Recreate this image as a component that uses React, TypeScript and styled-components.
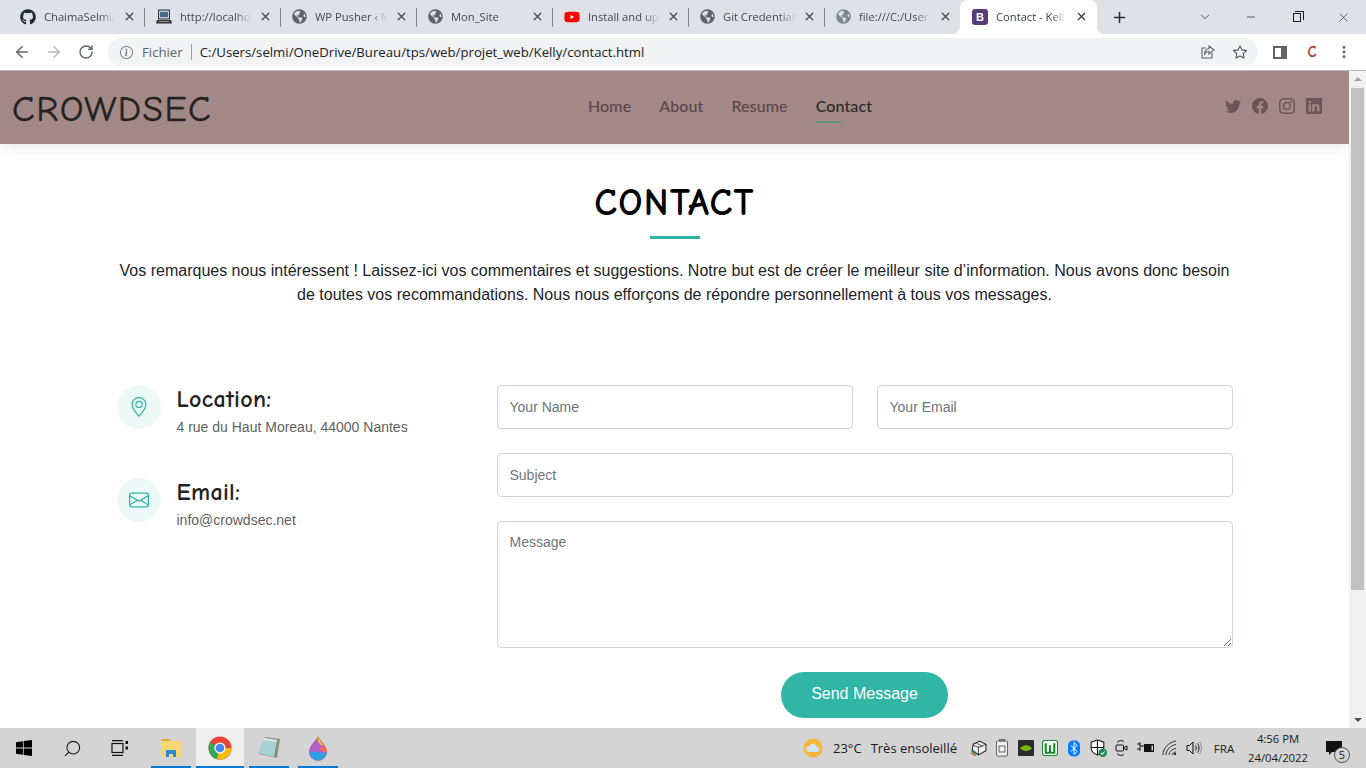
import React from 'react';
import styled, { createGlobalStyle, css } from 'styled-components';
import { BsTwitter, BsFacebook, BsInstagram, BsLinkedin, BsGeoAlt, BsEnvelope, BsInfoCircle, BsStar } from 'react-icons/bs';
import { FaGithub, FaGlobeAmericas, FaYoutube } from 'react-icons/fa';
import { ArrowLeft, ArrowRight, RotateCw, Plus, X, ChevronDown, Minus, Search, MoreVertical } from 'lucide-react';

const GlobalStyle = createGlobalStyle`
  html, body { margin: 0; padding: 0; overflow: hidden; background: #fff; }
  * { box-sizing: border-box; }
`;

const COMIC = `"Comic Sans MS", "Comic Neue", cursive, "Lato", sans-serif`;
const UI = `"Open Sans", "Noto Sans", sans-serif`;

// -------------
// Browser frame
// -------------

const Screen = styled.div`
  width: 1366px;
  height: 768px;
  display: flex;
  flex-direction: column;
  overflow: hidden;
  font-family: "Liberation Sans", Arial, sans-serif;
`;

const TabStrip = styled.div`
  height: 34px;
  background: #dee1e6;
  display: flex;
  align-items: flex-end;
  padding-left: 9px;
  flex-shrink: 0;
`;

const activeTab = css`
  width: 137px;
  margin-left: -1px;
  padding-left: 12px;
  background: #fff;
  color: #3c4043;
  border-radius: 8px 8px 0 0;
  &::before,
  &::after {
    content: '';
    position: absolute;
    bottom: 0;
    width: 8px;
    height: 8px;
  }
  &::before {
    left: -8px;
    background: radial-gradient(circle at 0 0, #dee1e6 8px, #fff 8.5px);
  }
  &::after {
    right: -8px;
    background: radial-gradient(circle at 100% 0, #dee1e6 8px, #fff 8.5px);
  }
`;

const separator = css`
  &::after {
    content: '';
    position: absolute;
    right: 0;
    top: 8px;
    width: 1px;
    height: 19px;
    background: #85888c;
  }
`;

const Tab = styled.div<{ $active?: boolean; $last?: boolean }>`
  position: relative;
  width: 136px;
  height: 34px;
  display: flex;
  align-items: center;
  padding: 0 9px 1px 11px;
  gap: 8px;
  font-family: ${UI};
  font-size: 11.2px;
  color: #45494e;
  svg { flex-shrink: 0; }
  ${p => (p.$active ? activeTab : p.$last ? '' : separator)}
`;

const TabTitle = styled.span`
  flex: 1;
  white-space: nowrap;
  overflow: hidden;
  -webkit-mask-image: linear-gradient(to right, #000 78%, transparent 100%);
  mask-image: linear-gradient(to right, #000 78%, transparent 100%);
`;

const BootstrapBadge = styled.span`
  width: 16px;
  height: 16px;
  border-radius: 3px;
  background: #563d7c;
  color: #fff;
  font-size: 11px;
  font-weight: 700;
  font-family: "Liberation Sans", sans-serif;
  display: flex;
  align-items: center;
  justify-content: center;
  flex-shrink: 0;
`;

const NewTab = styled.div`
  width: 44px;
  height: 34px;
  display: flex;
  align-items: center;
  justify-content: center;
  color: #2b2e31;
`;

const WindowControls = styled.div`
  margin-left: auto;
  display: flex;
  height: 34px;
  color: #202124;
`;

const WindowButton = styled.div`
  width: 46px;
  display: flex;
  align-items: center;
  justify-content: center;
`;

const RestoreIcon = styled.div`
  width: 8px;
  height: 9px;
  border: 1px solid #202124;
  position: relative;
  &::after {
    content: '';
    position: absolute;
    top: -3px;
    left: 1px;
    width: 8px;
    height: 8px;
    border-top: 1px solid #202124;
    border-right: 1px solid #202124;
  }
`;

const Toolbar = styled.div`
  height: 37px;
  background: #fff;
  display: flex;
  align-items: center;
  flex-shrink: 0;
  padding-left: 6px;
  border-bottom: 1px solid #b9b9b9;
`;

const NavIcon = styled.div<{ $muted?: boolean; $w?: number }>`
  width: ${p => p.$w || 32}px;
  height: 28px;
  display: flex;
  align-items: center;
  justify-content: center;
  color: ${p => (p.$muted ? '#b4b6b9' : '#5f6368')};
`;

const AddressBar = styled.div`
  width: 1150px;
  margin-left: 6px;
  height: 28px;
  border-radius: 14px;
  background: #f1f3f4;
  display: flex;
  align-items: center;
  padding-left: 12px;
  font-family: ${UI};
  font-size: 13.2px;
  color: #202124;
`;

const FileLabel = styled.span`
  color: #5f6368;
  margin-left: 9px;
  padding-right: 8px;
  border-right: 1px solid #9aa0a6;
  line-height: 16px;
`;

const Url = styled.span`
  margin-left: 8px;
`;

const AddressActions = styled.div`
  margin-left: auto;
  display: flex;
  align-items: center;
  padding-right: 2px;
`;

const ExtensionLetter = styled.span`
  font-family: ${COMIC};
  font-weight: 700;
  font-size: 15px;
  color: #a8392b;
`;

const SidePanelIcon = styled.div`
  width: 14px;
  height: 13px;
  border: 2px solid #5f6368;
  border-right-width: 6px;
`;

// --------
// Viewport
// --------

const Viewport = styled.div`
  flex: 1;
  display: flex;
  min-height: 0;
`;

const Page = styled.div`
  flex: 1;
  min-width: 0;
  overflow: hidden;
  background: #fff;
`;

const Scrollbar = styled.div`
  width: 17px;
  background: #f1f1f1;
  display: flex;
  flex-direction: column;
  align-items: center;
  justify-content: space-between;
`;

const ScrollArrow = styled.div<{ $down?: boolean }>`
  width: 0;
  height: 0;
  margin: 6px 0;
  border-left: 4px solid transparent;
  border-right: 4px solid transparent;
  border-${p => (p.$down ? 'top' : 'bottom')}: 4px solid ${p => (p.$down ? '#505050' : '#a3a3a3')};
`;

const ScrollThumb = styled.div`
  width: 13px;
  height: 502px;
  margin-top: 1px;
  background: #c1c1c1;
  margin-bottom: auto;
`;

const Header = styled.header`
  height: 73px;
  background: #a38888;
  display: flex;
  align-items: center;
  padding: 0 27px 3px 12px;
  position: relative;
  box-shadow: 0 2px 15px rgba(0, 0, 0, 0.1);
`;

const Logo = styled.div`
  width: 480px;
  font-family: ${COMIC};
  font-size: 37px;
  letter-spacing: 1.5px;
  color: #222;
  line-height: 1;
  -webkit-text-stroke: 0.4px #222;
  position: relative;
  top: 3px;
`;

const Nav = styled.nav`
  display: flex;
  gap: 28px;
  margin: 0 0 2px 96px;
`;

const NavLink = styled.a<{ $active?: boolean }>`
  font-family: "Lato", sans-serif;
  font-size: 16px;
  font-weight: 500;
  letter-spacing: 0.1px;
  color: ${p => (p.$active ? '#2b2b2b' : '#5e4548')};
  position: relative;
  &::after {
    content: '';
    display: ${p => (p.$active ? 'block' : 'none')};
    position: absolute;
    left: 0;
    bottom: -8px;
    width: 25px;
    height: 2px;
    background: #5f9180;
  }
`;

const Socials = styled.div`
  margin-left: auto;
  display: flex;
  gap: 11px;
  color: #6b5558;
  font-size: 16px;
  svg { display: block; }
`;

const Section = styled.section`
  width: 1140px;
  margin: 0 auto;
  padding: 40px 12px 0;
`;

const Title = styled.h2`
  margin: 0;
  text-align: center;
  font-family: ${COMIC};
  font-size: 38px;
  letter-spacing: 1.3px;
  font-weight: 700;
  line-height: 38px;
  color: #000;
  position: relative;
  padding-bottom: 17px;
  &::after {
    content: '';
    position: absolute;
    left: 50%;
    bottom: 0;
    width: 50px;
    height: 3px;
    margin-left: -25px;
    background: #2eb5a4;
  }
`;

const Lead = styled.p`
  margin: 20px 0 0;
  text-align: center;
  font-size: 16px;
  line-height: 24px;
  color: #212529;
`;

const Columns = styled.div`
  display: flex;
  margin-top: 78px;
`;

const InfoColumn = styled.div`
  width: 380px;
  flex-shrink: 0;
  display: flex;
  flex-direction: column;
  gap: 49px;
`;

const InfoItem = styled.div`
  display: flex;
  gap: 16px;
  height: 44px;
`;

const InfoIcon = styled.div`
  width: 44px;
  height: 44px;
  border-radius: 50%;
  background: #ecf9f7;
  color: #2eb5a4;
  font-size: 20px;
  display: flex;
  align-items: center;
  justify-content: center;
  flex-shrink: 0;
`;

const InfoHeading = styled.h4`
  margin: 0 0 6px;
  font-family: ${COMIC};
  font-size: 24px;
  letter-spacing: 0.3px;
  font-weight: 700;
  line-height: 28px;
  color: #222;
`;

const InfoText = styled.p`
  margin: 0;
  font-size: 14px;
  line-height: 16px;
  color: #5f5f5f;
`;

const ContactForm = styled.form`
  flex: 1;
  display: flex;
  flex-direction: column;
  gap: 24px;
`;

const FormRow = styled.div`
  display: flex;
  gap: 24px;
`;

const Input = styled.input`
  flex: 1;
  min-width: 0;
  height: 44px;
  padding: 0 12px;
  border: 1px solid #ced4da;
  border-radius: 4px;
  background: #fff;
  font-family: inherit;
  font-size: 14px;
  &::placeholder { color: #6c757d; opacity: 1; }
`;

const TextArea = styled.textarea`
  display: block;
  width: 100%;
  height: 127px;
  padding: 12px;
  border: 1px solid #ced4da;
  border-radius: 4px;
  background: #fff;
  font-family: inherit;
  font-size: 14px;
  line-height: 17px;
  &::placeholder { color: #6c757d; opacity: 1; }
`;

const SendButton = styled.button`
  align-self: center;
  width: 167px;
  height: 46px;
  padding: 0 0 2px;
  border: 0;
  border-radius: 23px;
  background: #31b5a5;
  color: #fff;
  font-family: inherit;
  font-size: 16px;
`;

// -------
// Taskbar
// -------

const Taskbar = styled.div`
  height: 40px;
  background: #d4d4d4;
  display: flex;
  align-items: stretch;
  flex-shrink: 0;
  color: #1a1a1a;
`;

const StartCell = styled.div`
  width: 48px;
  display: flex;
  align-items: center;
  justify-content: center;
`;

const AppCell = styled.div<{ $active?: boolean; $ml?: number }>`
  width: ${p => (p.$active ? 48 : 40)}px;
  margin-left: ${p => p.$ml || 0}px;
  display: flex;
  align-items: center;
  justify-content: center;
  background: ${p => (p.$active ? '#eeeeee' : 'transparent')};
  border-bottom: 2px solid #0078d4;
  padding-top: 2px;
`;

const Tray = styled.div`
  margin-left: auto;
  display: flex;
  align-items: center;
  padding-right: 14px;
  font-family: ${UI};
  font-size: 13px;
`;

const TrayIcon = styled.div<{ $ml?: number }>`
  width: 24px;
  height: 24px;
  margin-left: ${p => p.$ml || 0}px;
  display: flex;
  align-items: center;
  justify-content: center;
`;

const WeatherText = styled.span<{ $ml: number }>`
  margin-left: ${p => p.$ml}px;
  white-space: nowrap;
`;

const Lang = styled.span`
  width: 30px;
  text-align: center;
  margin: 0 1px 0 3px;
  font-size: 11.5px;
`;

const Clock = styled.div`
  width: 76px;
  text-align: center;
  font-size: 11.3px;
  line-height: 19px;
`;

const Notification = styled.div`
  width: 36px;
  position: relative;
  display: flex;
  align-items: center;
  justify-content: center;
`;

const NotificationCount = styled.span`
  position: absolute;
  right: 2px;
  bottom: -7px;
  width: 16px;
  height: 16px;
  border: 1px solid #555;
  border-radius: 50%;
  background: #d4d4d4;
  font-size: 11px;
  line-height: 14px;
  text-align: center;
`;

// -----
// Icons
// -----

const WindowsLogo = () => (
  <svg width="16" height="16" viewBox="0 0 16 16" fill="#000">
    <path d="M0 2.2 6.9 1.2V7.6H0zM7.7 1.1 16 0V7.6H7.7zM0 8.4H6.9V14.8L0 13.8zM7.7 8.4H16V16L7.7 14.9z" />
  </svg>
);

const TaskView = () => (
  <svg width="18" height="16" viewBox="0 0 18 16" fill="none" stroke="#111" strokeWidth="1.2">
    <path d="M1 .6H12M1 15.4H12" />
    <rect x="1" y="3.5" width="11" height="9" />
    <rect x="14.5" y="1" width="2.5" height="3" fill="#111" stroke="none" />
    <rect x="14.5" y="6.5" width="2.5" height="3" fill="#111" stroke="none" />
  </svg>
);

const FolderIcon = () => (
  <svg width="22" height="20" viewBox="0 0 22 20">
    <path d="M1 1h8l2 2h10v16H1z" fill="#f7d774" />
    <path d="M1 1h8l2 2H1z" fill="#e2a83a" />
    <path d="M6 12h10v7h-3v-3H9v3H6z" fill="#2b89d6" />
  </svg>
);

const ChromeIcon = () => (
  <svg width="24" height="24" viewBox="0 0 24 24">
    <circle cx="12" cy="12" r="11.5" fill="#ea4335" />
    <path d="M12 12 2 6.3A11.5 11.5 0 0 0 9 23.1z" fill="#34a853" />
    <path d="M12 12h11.2A11.5 11.5 0 0 1 9 23.1z" fill="#fbbc05" />
    <circle cx="12" cy="12" r="5.6" fill="#fff" />
    <circle cx="12" cy="12" r="4.3" fill="#4285f4" />
  </svg>
);

const NotepadIcon = () => (
  <svg width="24" height="24" viewBox="0 0 24 24">
    <path d="M8 1 23 3 20 22 2 18z" fill="#8a8f7a" />
    <path d="M7 2 20 4 17 21 1 17z" fill="#a7d3d8" />
    <path d="M7 2 20 4 19.6 6 6 4z" fill="#dfe7e6" />
  </svg>
);

const DropIcon = () => (
  <svg width="20" height="26" viewBox="0 0 20 26">
    <path d="M10 1C12 6 19 10 19 17a9 9 0 0 1-18 0C1 10 8 6 10 1z" fill="#b05ec9" />
    <path d="M1.2 18A9 9 0 0 0 19 17C14 20 6 14 1.2 18z" fill="#2f9fe0" />
    <path d="M10 1C11 5 14 8 16 11 12 10 9 8 10 1z" fill="#f6c21c" />
    <path d="M16 11c2 2 3 4 3 6-3 1-5-1-8-3 1-2 3-3 5-3z" fill="#ee6a5e" />
  </svg>
);

const LaptopTab = () => (
  <svg width="16" height="16" viewBox="0 0 16 16">
    <rect x="2.5" y="1" width="11" height="9" fill="#bcd" stroke="#333" />
    <rect x="4" y="3" width="8" height="5" fill="#4a6a8a" />
    <path d="M1 11h14l1 3.5H0z" fill="#333" />
    <path d="M3 12.5h10" stroke="#999" />
  </svg>
);

const ShareIcon = () => (
  <svg width="16" height="16" viewBox="0 0 16 16" fill="none" stroke="#5f6368" strokeWidth="1.1">
    <path d="M6 4H2v10h10V9" />
    <path d="M9 2l5 4-5 4V7.5C6.5 7.5 5 9 4.5 11 4.5 7 6.5 4.8 9 4.5z" />
  </svg>
);

const WeatherIcon = () => (
  <svg width="20" height="20" viewBox="0 0 20 20">
    <circle cx="10" cy="10" r="9.5" fill="#f6b73c" />
    <path d="M6 14a3 3 0 0 1 .5-6 4 4 0 0 1 7.5 1 2.5 2.5 0 0 1 0 5z" fill="#cfe3f2" />
  </svg>
);

const PrinterTray = () => (
  <svg width="17" height="17" viewBox="0 0 16 16">
    <path d="M3 4 9 1 15 4V10L8 14 2 10z" fill="#eee" stroke="#222" />
    <path d="M8 6V14M3 5l5 2 7-3M6 3l6 3" fill="none" stroke="#222" strokeWidth=".7" />
    <path d="M1 12l4 3" stroke="#d33" />
    <path d="M2 11l4 3" stroke="#2a2" />
    <path d="M3 10l4 3" stroke="#26a" />
  </svg>
);

const BatteryTray = () => (
  <svg width="12" height="18" viewBox="0 0 12 18" fill="none" stroke="#666">
    <rect x=".5" y="2" width="11" height="15" rx="1" fill="#eee" />
    <rect x="3.5" y=".5" width="5" height="1.5" />
    <rect x="3" y="7" width="6" height="6" />
  </svg>
);

const NvidiaTray = () => (
  <svg width="16" height="16" viewBox="0 0 15 15">
    <rect width="15" height="15" rx="1" fill="#2b2b2b" />
    <path d="M2 8c3-4 8-4 11 0-3 3-8 3-11 0z" fill="#76b900" />
  </svg>
);

const GreenTray = () => (
  <svg width="16" height="16" viewBox="0 0 15 15" fill="none">
    <rect x=".5" y=".5" width="14" height="14" rx="2" fill="#fff" stroke="#1a8a2e" />
    <path d="M3.5 3v9h8V3M7.5 5v7" stroke="#1a8a2e" strokeWidth="2" />
  </svg>
);

const BluetoothTray = () => (
  <svg width="12" height="17" viewBox="0 0 12 16">
    <rect width="12" height="16" rx="5" fill="#0a7cff" />
    <path d="M3 5l6 6-3 3V2l3 3-6 6" fill="none" stroke="#fff" />
  </svg>
);

const ShieldTray = () => (
  <svg width="17" height="18" viewBox="0 0 16 17">
    <path d="M7 1 13 3V8C13 12 10 14 7 15 4 14 1 12 1 8V3z" fill="#fff" stroke="#111" />
    <path d="M7 1V15M1 8H13" stroke="#111" />
    <circle cx="12" cy="13" r="4" fill="#1b8a4c" />
    <path d="M10.2 13l1.3 1.3 2.3-2.5" fill="none" stroke="#fff" />
  </svg>
);

const CameraTray = () => (
  <svg width="14" height="18" viewBox="0 0 14 18" fill="none" stroke="#111">
    <path d="M2 3.5C3 1.5 7 1 9 2.5M2 14.5C3 16.5 7 17 9 15.5" />
    <rect x="1" y="6" width="7.5" height="6" rx="1" />
    <path d="M9 8.5l3-1.5v4l-3-1.500" />
  </svg>
);

const PowerTray = () => (
  <svg width="18" height="14" viewBox="0 0 18 14">
    <path d="M0 3h3M0 8h3M3 1v9M3 5h4" stroke="#111" fill="none" />
    <rect x="7" y="3" width="10" height="8" fill="#111" />
    <rect x="14.5" y="4.5" width="1.5" height="5" fill="#d4d4d4" />
  </svg>
);

const WifiTray = () => (
  <svg width="16" height="16" viewBox="0 0 16 16" fill="none" stroke="#333" strokeWidth="1">
    <path d="M1 15C1 8 7 2 14 1M4 15C4 10 9 5 14 4.5M7 15C7 12 10 9 14 8.5M10 15c0-1.5 2-3 4-3" />
    <circle cx="13" cy="14" r="1.2" fill="#333" stroke="none" />
  </svg>
);

const VolumeTray = () => (
  <svg width="16" height="16" viewBox="0 0 16 16" fill="none" stroke="#111" strokeWidth="1">
    <path d="M1 5.5h2.5L7 2v12L3.5 10.5H1z" />
    <path d="M9.5 5.5c1 1.5 1 3.5 0 5M11.5 3.5c2 2.5 2 6.5 0 9" />
    <path d="M13.5 2c2.5 3.5 2.5 8.500 0 12" stroke="#888" />
  </svg>
);

const messages = 'Vos remarques nous intéressent ! Laissez-ici vos commentaires et suggestions. Notre but est de créer le meilleur site d’information. Nous avons donc besoin de toutes vos recommandations. Nous nous efforçons de répondre personnellement à tous vos messages.';

export default function App() {
  return (
    <Screen>
      <GlobalStyle />
      <TabStrip>
        <Tab><FaGithub size={16} color="#24292e" /><TabTitle>ChaimaSelmi/</TabTitle><X size={13} strokeWidth={2.4} /></Tab>
        <Tab><LaptopTab /><TabTitle>http://localho</TabTitle><X size={13} strokeWidth={2.4} /></Tab>
        <Tab><FaGlobeAmericas size={15} color="#5f6368" /><TabTitle>WP Pusher ‹ M</TabTitle><X size={13} strokeWidth={2.4} /></Tab>
        <Tab><FaGlobeAmericas size={15} color="#5f6368" /><TabTitle>Mon_Site</TabTitle><X size={13} strokeWidth={2.4} /></Tab>
        <Tab><FaYoutube size={16} color="#f00" /><TabTitle>Install and up</TabTitle><X size={13} strokeWidth={2.4} /></Tab>
        <Tab><FaGlobeAmericas size={15} color="#5f6368" /><TabTitle>Git Credential</TabTitle><X size={13} strokeWidth={2.4} /></Tab>
        <Tab $last><FaGlobeAmericas size={15} color="#80868b" /><TabTitle>file:///C:/User</TabTitle><X size={13} strokeWidth={2.4} /></Tab>
        <Tab $active><BootstrapBadge>B</BootstrapBadge><TabTitle>Contact - Kell</TabTitle><X size={13} strokeWidth={2.4} /></Tab>
        <NewTab><Plus size={17} strokeWidth={2.2} /></NewTab>
        <WindowControls>
          <WindowButton><ChevronDown size={14} strokeWidth={1.2} /></WindowButton>
          <WindowButton><Minus size={12} strokeWidth={1.4} /></WindowButton>
          <WindowButton><RestoreIcon /></WindowButton>
          <WindowButton><X size={15} strokeWidth={1} /></WindowButton>
        </WindowControls>
      </TabStrip>
      <Toolbar>
        <NavIcon><ArrowLeft size={18} strokeWidth={2} /></NavIcon>
        <NavIcon $muted><ArrowRight size={18} strokeWidth={2} /></NavIcon>
        <NavIcon><RotateCw size={16} strokeWidth={2.2} /></NavIcon>
        <AddressBar>
          <BsInfoCircle size={13} color="#5f6368" />
          <FileLabel>Fichier</FileLabel>
          <Url>C:/Users/selmi/OneDrive/Bureau/tps/web/projet_web/Kelly/contact.html</Url>
          <AddressActions>
            <NavIcon><ShareIcon /></NavIcon>
            <NavIcon><BsStar size={14} color="#3c4043" /></NavIcon>
          </AddressActions>
        </AddressBar>
        <NavIcon $w={44}><SidePanelIcon /></NavIcon>
        <NavIcon $w={20}><ExtensionLetter>C</ExtensionLetter></NavIcon>
        <NavIcon $w={44}><MoreVertical size={16} strokeWidth={2.4} /></NavIcon>
      </Toolbar>
      <Viewport>
        <Page>
          <Header>
            <Logo>CROWDSEC</Logo>
            <Nav>
              <NavLink>Home</NavLink>
              <NavLink>About</NavLink>
              <NavLink>Resume</NavLink>
              <NavLink $active>Contact</NavLink>
            </Nav>
            <Socials>
              <BsTwitter />
              <BsFacebook />
              <BsInstagram />
              <BsLinkedin />
            </Socials>
          </Header>
          <Section>
            <Title>CONTACT</Title>
            <Lead>{messages}</Lead>
            <Columns>
              <InfoColumn>
                <InfoItem>
                  <InfoIcon><BsGeoAlt /></InfoIcon>
                  <div>
                    <InfoHeading>Location:</InfoHeading>
                    <InfoText>4 rue du Haut Moreau, 44000 Nantes</InfoText>
                  </div>
                </InfoItem>
                <InfoItem>
                  <InfoIcon><BsEnvelope /></InfoIcon>
                  <div>
                    <InfoHeading>Email:</InfoHeading>
                    <InfoText>info@crowdsec.net</InfoText>
                  </div>
                </InfoItem>
              </InfoColumn>
              <ContactForm>
                <FormRow>
                  <Input placeholder="Your Name" />
                  <Input placeholder="Your Email" />
                </FormRow>
                <FormRow>
                  <Input placeholder="Subject" />
                </FormRow>
                <TextArea placeholder="Message" />
                <SendButton type="button">Send Message</SendButton>
              </ContactForm>
            </Columns>
          </Section>
        </Page>
        <Scrollbar>
          <ScrollArrow />
          <ScrollThumb />
          <ScrollArrow $down />
        </Scrollbar>
      </Viewport>
      <Taskbar>
        <StartCell><WindowsLogo /></StartCell>
        <StartCell><Search size={19} strokeWidth={1.4} style={{ transform: 'scaleX(-1)' }} /></StartCell>
        <StartCell><TaskView /></StartCell>
        <AppCell $ml={7}><FolderIcon /></AppCell>
        <AppCell $ml={5} $active><ChromeIcon /></AppCell>
        <AppCell $ml={5}><NotepadIcon /></AppCell>
        <AppCell $ml={9}><DropIcon /></AppCell>
        <Tray>
          <WeatherIcon />
          <WeatherText $ml={10}>23°C</WeatherText>
          <WeatherText $ml={9}>Très ensoleillé</WeatherText>
          <TrayIcon $ml={9}><PrinterTray /></TrayIcon>
          <TrayIcon><BatteryTray /></TrayIcon>
          <TrayIcon><NvidiaTray /></TrayIcon>
          <TrayIcon><GreenTray /></TrayIcon>
          <TrayIcon><BluetoothTray /></TrayIcon>
          <TrayIcon><ShieldTray /></TrayIcon>
          <TrayIcon><CameraTray /></TrayIcon>
          <TrayIcon><PowerTray /></TrayIcon>
          <TrayIcon><WifiTray /></TrayIcon>
          <TrayIcon><VolumeTray /></TrayIcon>
          <Lang>FRA</Lang>
          <Clock>4:56 PM<br />24/04/2022</Clock>
          <Notification>
            <svg width="16" height="15" viewBox="0 0 16 15"><path d="M0 0H16V11H6L3 14V11H0z" fill="#111" /></svg>
            <NotificationCount>5</NotificationCount>
          </Notification>
        </Tray>
      </Taskbar>
    </Screen>
  );
}
